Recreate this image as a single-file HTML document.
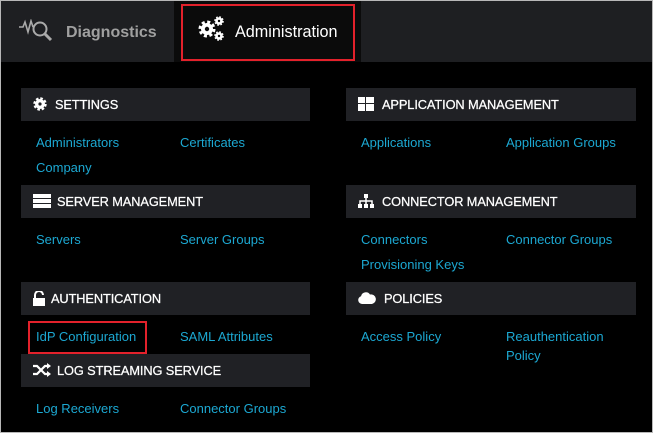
<!DOCTYPE html>
<html><head><style>
*{margin:0;padding:0;box-sizing:border-box}
body{width:653px;height:433px;background:#000;position:relative;overflow:hidden;font-family:"Liberation Sans",sans-serif}
.a{position:absolute}
.h{position:absolute;height:33px;background:#202125;color:#fff;font-size:12.8px;line-height:33px;padding-left:12px;letter-spacing:-0.1px;-webkit-text-stroke:0.25px #fff}
.h svg{position:absolute;left:12px;top:9px}
.h span{position:absolute;left:36px}
.l{position:absolute;color:#1ca8d2;font-size:13px}
</style></head><body>
<div class="a" style="left:0;top:0;width:653px;height:62px;background:#1e1f22"></div>
<div class="a" style="left:174px;top:0;width:187px;height:62px;background:#0b0b0b"></div>
<div class="a" style="left:181px;top:4px;width:174px;height:57px;border:2px solid #e3212b"></div>
<svg class="a" style="left:19px;top:19px" width="40" height="24" viewBox="0 0 40 24"><path d="M0 8h4l2-5 3 10 3-11 2 6" fill="none" stroke="#aaa" stroke-width="1.6"/><circle cx="21" cy="10" r="6.5" fill="none" stroke="#aaa" stroke-width="2"/><path d="M26 15l6 6" stroke="#aaa" stroke-width="3"/></svg>
<div class="a" style="left:66px;top:24px;color:#a0a0a0;font-size:16px;font-weight:bold">Diagnostics</div>
<svg class="a" style="left:197px;top:15px" width="30" height="28" viewBox="0 0 30 28"><circle cx="10" cy="14" r="6.5" fill="none" stroke="#fff" stroke-width="4" stroke-dasharray="2.8 2.3"/><circle cx="10" cy="14" r="6" fill="#fff"/><circle cx="10" cy="14" r="2.2" fill="#0b0b0b"/><circle cx="22" cy="6" r="3.8" fill="#fff" stroke="#fff" stroke-width="2" stroke-dasharray="1.6 1.4"/><circle cx="22" cy="6" r="1.2" fill="#0b0b0b"/><circle cx="22" cy="21" r="3.8" fill="#fff" stroke="#fff" stroke-width="2" stroke-dasharray="1.6 1.4"/><circle cx="22" cy="21" r="1.2" fill="#0b0b0b"/></svg>
<div class="a" style="left:235px;top:23px;color:#fff;font-size:16.2px">Administration</div>

<div class="h" style="left:21px;top:88px;width:289px"><svg width="14" height="14" viewBox="0 0 14 14"><circle cx="7" cy="7" r="5.2" fill="none" stroke="#fff" stroke-width="3" stroke-dasharray="2.4 1.7"/><circle cx="7" cy="7" r="5" fill="#fff"/><circle cx="7" cy="7" r="1.6" fill="#202125"/></svg><span style="left:34px">SETTINGS</span></div>
<div class="l" style="left:36px;top:135px">Administrators</div><div class="l" style="left:180px;top:135px">Certificates</div>
<div class="l" style="left:36px;top:160px">Company</div>

<div class="h" style="left:21px;top:185px;width:289px"><svg width="18" height="14" viewBox="0 0 18 14"><rect x="0" y="0" width="18" height="4" fill="#fff"/><rect x="0" y="5" width="18" height="4" fill="#fff"/><rect x="0" y="10" width="18" height="4" fill="#fff"/></svg><span>SERVER MANAGEMENT</span></div>
<div class="l" style="left:36px;top:232px">Servers</div><div class="l" style="left:180px;top:232px">Server Groups</div>

<div class="h" style="left:21px;top:282px;width:289px"><svg width="12" height="15" viewBox="0 0 12 15"><path d="M2 7V4a4 4 0 0 1 8 0" fill="none" stroke="#fff" stroke-width="2"/><rect x="0" y="7" width="12" height="8" fill="#fff"/></svg><span style="left:30px">AUTHENTICATION</span></div>
<div class="l" style="left:36px;top:329px">IdP Configuration</div><div class="l" style="left:180px;top:329px">SAML Attributes</div>
<div class="a" style="left:28px;top:321px;width:119px;height:33px;border:2px solid #e3212b"></div>

<div class="h" style="left:21px;top:354px;width:289px"><svg width="18" height="14" viewBox="0 0 18 14"><path d="M0 3h4l8 8h3M0 11h4l8-8h3" fill="none" stroke="#fff" stroke-width="2.2"/><path d="M14 0l4 3-4 3zM14 8l4 3-4 3z" fill="#fff"/></svg><span>LOG STREAMING SERVICE</span></div>
<div class="l" style="left:36px;top:401px">Log Receivers</div><div class="l" style="left:180px;top:401px">Connector Groups</div>

<div class="h" style="left:346px;top:88px;width:290px"><svg width="16" height="14" viewBox="0 0 16 14"><rect x="0" y="0" width="7" height="6" fill="#fff"/><rect x="8" y="0" width="8" height="6" fill="#fff"/><rect x="0" y="7" width="7" height="7" fill="#fff"/><rect x="8" y="7" width="8" height="7" fill="#fff"/></svg><span>APPLICATION MANAGEMENT</span></div>
<div class="l" style="left:361px;top:135px">Applications</div><div class="l" style="left:506px;top:135px">Application Groups</div>

<div class="h" style="left:346px;top:185px;width:290px"><svg width="16" height="15" viewBox="0 0 16 15"><rect x="6" y="0" width="4" height="4" fill="#fff"/><path d="M8 4v3M2 11V7h12v4M8 7v4" fill="none" stroke="#fff" stroke-width="1.5"/><rect x="0" y="10" width="4" height="4" fill="#fff"/><rect x="6" y="10" width="4" height="4" fill="#fff"/><rect x="12" y="10" width="4" height="4" fill="#fff"/></svg><span>CONNECTOR MANAGEMENT</span></div>
<div class="l" style="left:361px;top:232px">Connectors</div><div class="l" style="left:506px;top:232px">Connector Groups</div>
<div class="l" style="left:361px;top:257px">Provisioning Keys</div>

<div class="h" style="left:346px;top:282px;width:290px"><svg width="18" height="13" viewBox="0 0 18 13"><path d="M4 13a4 4 0 0 1-1-7.8A5 5 0 0 1 12 3.5 4.5 4.5 0 0 1 14 13z" fill="#fff"/></svg><span style="left:38px">POLICIES</span></div>
<div class="l" style="left:361px;top:329px">Access Policy</div><div class="l" style="left:506px;top:329px">Reauthentication</div>
<div class="l" style="left:506px;top:348px">Policy</div>
<div class="a" style="left:0;top:0;width:653px;height:433px;border:1px solid #b8b8b8"></div>
</body></html>
